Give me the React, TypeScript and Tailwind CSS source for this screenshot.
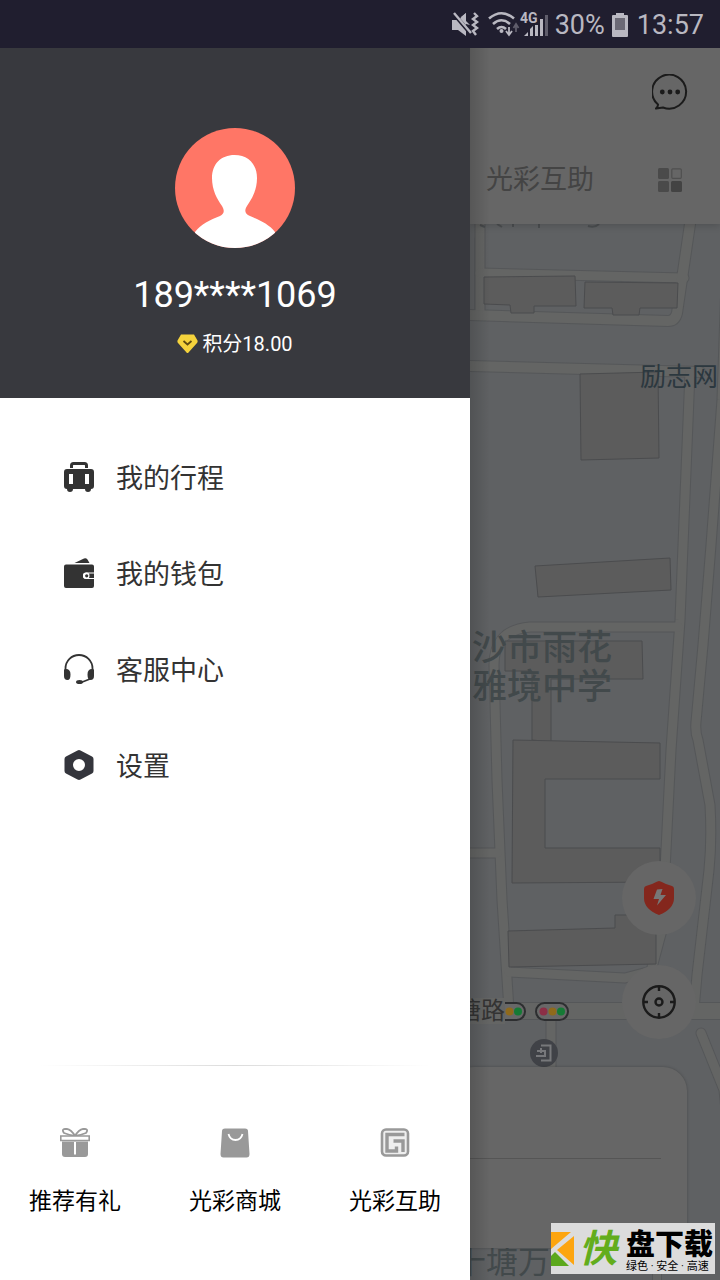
import type { ReactNode } from "react";

const roads: { d: string; w: number }[] = [
  { d: "M480 224V314", w: 9 },
  { d: "M480 273L684 278", w: 9 },
  { d: "M470 315L668 321Q675 321 677 313L690 224", w: 10 },
  { d: "M470 366L700 372", w: 10 },
  { d: "M690 372L680 620L671 750L662 930L650 975", w: 9 },
  { d: "M728 224L722 400L711 545L703 645L696 722Q695 732 698 740L710 805Q712 840 709 870L697 975L694 1010", w: 9 },
  { d: "M678 627H530Q494 630 494 665L497 780L502 900L509 1010", w: 9 },
  { d: "M470 853H497", w: 9 },
  { d: "M509 972L625 978L655 970", w: 9 },
  { d: "M470 1011H730", w: 16 },
  { d: "M551 1016V1070", w: 9 },
  { d: "M701 1033L724 1090L728 1130", w: 9 },
  { d: "M657 1240V1290", w: 8 },
];

const buildings = [
  "M484 277L575 276L576 306L534 306V313H511L510 305L484 304Z",
  "M585 282L678 283L677 308H640L639 315H613L612 308H584Z",
  "M580 374L658 372L659 458L581 460Z",
  "M535 566L670 558L671 590L538 597Z",
  "M505 641H642L643 679H551V742L532 740V671H505Z",
  "M513 740L660 743V779H545V848H660V882L512 883Z",
  "M508 931L615 928V915H656V964L509 967Z",
];

function MapCanvas() {
  return (
    <svg
      className="absolute inset-0 h-full w-full"
      viewBox="470 224 250 1056"
      preserveAspectRatio="xMinYMin slice"
      aria-hidden="true"
    >
      <rect x="470" y="224" width="800" height="1056" fill="#5f6163" />
      <g fill="none" stroke="#555759" strokeLinejoin="round" strokeLinecap="round">
        <path d="M475 238V310" strokeWidth="1" />
        {roads.map((r) => (
          <path key={r.d} d={r.d} strokeWidth={r.w + 2} />
        ))}
      </g>
      <g fill="none" stroke="#646564" strokeLinejoin="round" strokeLinecap="round">
        {roads.map((r) => (
          <path key={r.d} d={r.d} strokeWidth={r.w} />
        ))}
      </g>
      <g fill="#5c5c5c" stroke="#4b4c4e" strokeWidth="1">
        {buildings.map((d) => (
          <path key={d} d={d} />
        ))}
      </g>
      <path
        d="M480 225l5 2M497 224l5 3M513 224v3M539 224v4M588 226q7 2 11-2"
        stroke="#4b4e50"
        strokeWidth="2"
        fill="none"
      />
    </svg>
  );
}

function TrafficLight() {
  return (
    <svg width="34" height="19" viewBox="0 0 34 19" aria-hidden="true">
      <rect x="1" y="1" width="32" height="17" rx="8.5" fill="#686868" stroke="#2d2e30" strokeWidth="2" />
      <circle cx="8.500" cy="9.500" r="4" fill="#8c2f46" />
      <circle cx="17.500" cy="9.500" r="4" fill="#8f6a1c" />
      <circle cx="26" cy="9.500" r="4" fill="#157a35" />
    </svg>
  );
}

function StatusBar() {
  return (
    <header className="flex h-12 shrink-0 items-center justify-end bg-[#201e2f] pt-0.5 pr-4 font-[Roboto,sans-serif] text-[27px] leading-8 text-[#b9b8c1]">
      <svg width="98" height="28" viewBox="0 0 98 28" aria-hidden="true" className="mr-1.5">
        <g fill="#b9b8c1">
          <path d="M1 9h6l8-7v8l4 4-4-1v12L7 19H1z" />
          <path d="M15 10V2l-5 4z" />
        </g>
        <path d="M2 2l18 21" stroke="#201e2f" strokeWidth="4" />
        <path d="M3 2l17 20" stroke="#b9b8c1" strokeWidth="2.400" />
        <path d="M23 2l3 3-4 3 4 3-4 3 4 3-4 3 3 4" stroke="#b9b8c1" strokeWidth="2.400" fill="none" />
        <g fill="none" stroke="#b9b8c1" strokeWidth="2.600">
          <path d="M38 7.500Q50.500-3 63 7.500" />
          <path d="M42 13q8.500-7.500 17 0" />
          <path d="M46 18q4.500-4 9 0" />
        </g>
        <circle cx="50.500" cy="20" r="2" fill="#b9b8c1" />
        <path d="M58 16v7M55 20l3 4 3-4" stroke="#b9b8c1" strokeWidth="1.800" fill="none" />
        <path d="M65 21v-7M62.500 17l2.500-4 2.500 4" stroke="#5f5d6b" strokeWidth="1.800" fill="none" />
        <text x="69" y="12" fontSize="14" fontWeight="700" fill="#b9b8c1" fontFamily="Roboto, sans-serif">
          4G
        </text>
        <path d="M73 25l4-4v4zM79 25v-7l3-3v10zM84 25V14h3v11zM89 25V8h3v17z" fill="#b9b8c1" />
        <path d="M94 4h3v21h-3z" fill="#5f5d6b" />
      </svg>
      <span>30%</span>
      <svg width="18" height="24" viewBox="0 0 18 24" aria-hidden="true" className="mr-2 ml-1.5">
        <path d="M5 0h8v2h3q1 0 1 1v20q0 1-1 1H2q-1 0-1-1V3q0-1 1-1h3z" fill="#b9b8c1" />
        <path d="M4 5h10v12H4z" fill="#6b6975" />
      </svg>
      <span>13:57</span>
    </header>
  );
}

function MenuItem({ icon, label }: { icon: ReactNode; label: string }) {
  return (
    <li>
      <a href="#" className="flex h-24 items-center gap-[22px] pl-16 text-[27px] leading-10 text-[#333333]">
        <svg width="30" height="30" viewBox="0 0 30 30" aria-hidden="true">
          {icon}
        </svg>
        <span className="pt-1">{label}</span>
      </a>
    </li>
  );
}

function Shortcut({ icon, label }: { icon: ReactNode; label: string }) {
  return (
    <a href="#" className="flex flex-col items-center gap-7 text-[23px] leading-8 text-black">
      <svg width="30" height="30" viewBox="0 0 30 30" aria-hidden="true">
        {icon}
      </svg>
      <span>{label}</span>
    </a>
  );
}

function Drawer() {
  return (
    <aside className="flex w-[470px] shrink-0 flex-col bg-white">
      <section className="flex flex-col items-center bg-[#38393e] pt-20 pb-10 text-white">
        <svg width="120" height="120" viewBox="0 0 120 120" aria-hidden="true">
          <defs>
            <clipPath id="avatar">
              <circle cx="60" cy="60" r="60" />
            </clipPath>
          </defs>
          <g clipPath="url(#avatar)">
            <rect width="120" height="120" fill="#ff7666" />
            <path
              d="M59.500 27C46 27 37 36 37 50C37 62 42 71 47 78C50 83 49 86 45 88C35 92 26 96 20 104V122H100V104C94 96 84 92 75 88C70 86 69 83 72 78C77 71 82 62 82 50C82 36 73 27 59.500 27Z"
              fill="#fff"
            />
          </g>
        </svg>
        <h1 className="mt-6 text-[36px] leading-[46px] font-normal">189****1069</h1>
        <p className="mt-3 flex items-center gap-1 text-[20px] leading-7">
          <svg width="21" height="20" viewBox="0 0 21 20" aria-hidden="true">
            <path d="M4 0.500H17L20.500 6.500Q21 8 20 9L11.500 18.500Q10.500 19.500 9.500 18.500L1 9Q0 8 0.500 6.500Z" fill="#f5d33c" />
            <path d="M6.500 7L10.500 10.500L14.500 7" fill="none" stroke="#5d4a12" strokeWidth="1.800" />
          </svg>
          <span>积分18.00</span>
        </p>
      </section>

      <nav className="pt-[31px]">
        <ul>
          <MenuItem
            label="我的行程"
            icon={
              <>
                <path d="M7.500 6V3.500Q7.500 1.500 9.500 1.500H20.500Q22.500 1.500 22.500 3.500V6" fill="none" stroke="#333" strokeWidth="3" />
                <path
                  fillRule="evenodd"
                  d="M3 7H27Q30 7 30 10V24Q30 27 27 27Q27 30 24 30Q21 30 21 27H9Q9 30 6 30Q3 30 3 27Q0 27 0 24V10Q0 7 3 7ZM5 12V22H9V12ZM21 12V22H25V12Z"
                  fill="#333"
                />
              </>
            }
          />
          <MenuItem
            label="我的钱包"
            icon={
              <>
                <path d="M10.500 5L20 0.500Q22 -0.500 23.500 1.500L25.500 5Z" fill="#333" />
                <path
                  d="M2 6.500H28Q30 6.500 30 8.500V14.500H22.500Q19 14.500 19 17.800Q19 21 22.500 21H30V28Q30 30 28 30H2Q0 30 0 28V8.500Q0 6.500 2 6.500Z"
                  fill="#333"
                />
                <path d="M23 16H30V19.700H23Q21 19.700 21 17.800Q21 16 23 16Z" fill="#fff" />
                <path d="M22 15.500H30V20H22Z" fill="#333" />
                <path d="M22.500 14.500Q19 14.500 19 17.800Q19 21 22.500 21Q25.500 21 25.500 17.800Q25.500 14.500 22.500 14.500Z" fill="#fff" />
                <circle cx="22.700" cy="17.800" r="1.600" fill="#333" />
              </>
            }
          />
          <MenuItem
            label="客服中心"
            icon={
              <>
                <path d="M1.500 18V14.500A13.500 13.500 0 0 1 28.500 14.500V18" fill="none" stroke="#333" strokeWidth="1.800" />
                <path d="M0 16Q0 15 2 15Q6.500 15 6.500 20.500Q6.500 26 3.500 26Q0 26 0 22ZM30 16Q30 15 28 15Q23.500 15 23.500 20.500Q23.500 26 26.500 26Q30 26 30 22Z" fill="#333" />
                <path d="M26 25L17 28.500" stroke="#333" strokeWidth="1.600" />
                <ellipse cx="15.500" cy="28" rx="3.500" ry="2" fill="#333" />
              </>
            }
          />
          <MenuItem
            label="设置"
            icon={
              <path
                fillRule="evenodd"
                d="M13.500 0.500Q15 -0.300 16.500 0.500L28 6.500Q29.500 7.200 29.500 9V21Q29.500 22.800 28 23.500L16.500 29.500Q15 30.300 13.500 29.500L2 23.500Q0.500 22.800 0.500 21V9Q0.500 7.200 2 6.500ZM15 9A6 6 0 1 0 15 21A6 6 0 1 0 15 9Z"
                fill="#34353c"
              />
            }
          />
        </ul>
      </nav>

      <footer className="mt-auto">
        <div className="mx-10 h-px bg-linear-to-r from-transparent via-[#dcdcdc] to-transparent" />
        <div className="flex justify-between px-[29px] pt-[62px] pb-[62px]">
          <Shortcut
            label="推荐有礼"
            icon={
              <>
                <path
                  d="M15 8Q9 7 4 5Q1 1 6 0.800Q11 1 15 8ZM15 8Q21 7 26 5Q29 1 24 0.800Q19 1 15 8Z"
                  fill="none"
                  stroke="#999"
                  strokeWidth="1.800"
                />
                <path d="M0.800 8H29.200V12.500H0.800Z" fill="#fff" stroke="#999" strokeWidth="1.600" />
                <path d="M2 13.500H28V26Q28 29 25 29H5Q2 29 2 26Z" fill="#999" />
                <path d="M15 14V26.500" stroke="#fff" strokeWidth="2" />
              </>
            }
          />
          <Shortcut
            label="光彩商城"
            icon={
              <>
                <path d="M5 0.500H25Q28 0.500 28 3L29.500 26Q29.500 29.500 26.500 29.500H3.500Q0.500 29.500 0.500 26L2 3Q2 0.500 5 0.500Z" fill="#999" />
                <path d="M8.500 6Q10 12 15.500 12Q21 12 22.500 6" fill="none" stroke="#fff" strokeWidth="1.800" />
              </>
            }
          />
          <Shortcut
            label="光彩互助"
            icon={
              <>
                <rect x="2" y="1.500" width="26" height="26" rx="4" fill="#eee" stroke="#999" strokeWidth="2.600" />
                <path d="M24.500 6.500H7V23H16.500V18.500" fill="none" stroke="#999" strokeWidth="3.400" />
                <path d="M13.500 13H23V24" fill="none" stroke="#999" strokeWidth="3.400" />
              </>
            }
          />
        </div>
      </footer>
    </aside>
  );
}

function MapScreen() {
  return (
    <main className="relative flex min-w-0 flex-1 flex-col overflow-hidden bg-[#5f6163]">
      <header className="z-10 flex h-44 shrink-0 flex-col bg-[#666666] shadow-[0_1px_8px_rgba(0,0,0,0.2)]">
        <button type="button" aria-label="消息" className="mt-[26px] mr-8 self-end">
          <svg width="36" height="36" viewBox="0 0 36 36" aria-hidden="true">
            <path
              d="M6 30.500A17 17 0 1 1 11 33.500L4 34.500Q6.200 32.500 6 30.500Z"
              fill="none"
              stroke="#1b1b1b"
              strokeWidth="2"
              strokeLinejoin="round"
            />
            <g fill="#1b1b1b">
              <circle cx="10.300" cy="18" r="2.400" />
              <circle cx="18" cy="18" r="2.400" />
              <circle cx="25.700" cy="18" r="2.400" />
            </g>
          </svg>
        </button>
        <div className="mt-[50px] flex items-center justify-between pr-[38px] pl-4">
          <a href="#" className="text-[27px] leading-10 whitespace-nowrap text-[#444444]">
            光彩互助
          </a>
          <button type="button" aria-label="全部">
            <svg width="24" height="24" viewBox="0 0 24 24" aria-hidden="true">
              <g fill="#4a4a4a">
                <rect width="11" height="11" rx="1.500" />
                <rect y="13" width="11" height="11" rx="1.500" />
                <rect x="13" y="13" width="11" height="11" rx="1.500" fill="#434343" />
              </g>
              <rect x="13.800" y="0.800" width="9.500" height="9.500" rx="1" fill="none" stroke="#4f4f4f" strokeWidth="1.200" />
            </svg>
          </button>
        </div>
      </header>

      <section className="relative flex-1 overflow-hidden">
        <MapCanvas />
        <span className="absolute top-[133px] left-[170px] text-[26px] leading-10 whitespace-nowrap text-[#2c383f]">
          励志网
        </span>
        <p className="absolute top-[405px] right-[108px] text-right text-[35px] leading-[39px] font-medium whitespace-nowrap text-[#42494b]">
          沙市雨花
          <br />
          雅境中学
        </p>
        <span className="absolute top-[778px] left-[22px]">
          <TrafficLight />
        </span>
        <span className="absolute top-[774px] right-[215px] bg-[#646564] text-[24px] leading-[26px] whitespace-nowrap text-[#333333]">
          塘路
        </span>
        <span className="absolute top-[778px] left-[65px]">
          <TrafficLight />
        </span>
        <svg className="absolute top-[815px] left-[60px]" width="28" height="28" viewBox="0 0 28 28" aria-hidden="true">
          <circle cx="14" cy="14" r="14" fill="#404247" />
          <path d="M11 6.500H20.500V21.500H11M7 12H15V17H6M11 9V14" fill="none" stroke="#77787b" strokeWidth="2" />
        </svg>
        <span className="absolute bottom-0 left-[-16px] text-[32px] leading-9 whitespace-nowrap text-[#42494b]">
          十塘万
        </span>
        <div className="absolute right-[33px] bottom-8 left-[-20px] h-[181px] rounded-t-3xl bg-[#666666] pt-[91px] shadow-[0_0_3px_rgba(0,0,0,0.25)]">
          <hr className="mr-[26px] border-[#555555]" />
        </div>
        <button
          type="button"
          aria-label="安全中心"
          className="absolute top-[637px] right-6 flex size-[74px] items-center justify-center rounded-full bg-[#666666]"
        >
          <svg width="30" height="34" viewBox="0 0 30 34" aria-hidden="true">
            <path d="M15 0Q16 0 22 3L28 5Q30 5.500 30 8V17Q30 28 15 34Q0 28 0 17V8Q0 5.500 2 5L8 3Q14 0 15 0Z" fill="#84271d" />
            <path d="M13 8.500L18.500 8L16.500 14H22L13 24.500L15 18H9.500Z" fill="#777" />
          </svg>
        </button>
        <button
          type="button"
          aria-label="定位"
          className="absolute top-[741px] right-6 flex size-[74px] items-center justify-center rounded-full bg-[#666666]"
        >
          <svg width="34" height="34" viewBox="0 0 34 34" aria-hidden="true">
            <g fill="none" stroke="#1b1b1b" strokeWidth="2.400">
              <circle cx="17" cy="17" r="15.700" />
              <circle cx="17" cy="17" r="3.500" />
              <path d="M17 1V6M17 28V33M1 17H6M28 17H33" />
            </g>
          </svg>
        </button>
        <div className="absolute right-[5px] bottom-[6px] flex h-[51px] w-[164px] items-center gap-[5px] overflow-hidden bg-[#dcdcdc]">
          <svg width="23" height="34" viewBox="0 0 23 34" className="shrink-0" aria-hidden="true">
            <path d="M0 0H20L0 17ZM23 4V33L6 18Z" fill="#fda50f" />
            <path d="M4 20L18 34H0V24Z" fill="#5ca81c" />
          </svg>
          <span className="shrink-0 text-[38px] leading-10 font-bold text-[#63ad1c] italic">快</span>
          <span className="flex shrink-0 flex-col pt-2 pl-1 text-black">
            <span className="text-[29px] leading-7 font-black whitespace-nowrap">盘下载</span>
            <span className="text-[11px] leading-4 whitespace-nowrap">绿色 · 安全 · 高速</span>
          </span>
        </div>
      </section>
      <div className="pointer-events-none absolute inset-y-0 left-0 z-20 w-5 bg-linear-to-r from-black/15 to-transparent" />
    </main>
  );
}

export default function App() {
  return (
    <div className="flex min-h-screen flex-col bg-white font-[Roboto,'Noto_Sans_CJK_SC',sans-serif]">
      <StatusBar />
      <div className="flex flex-1">
        <Drawer />
        <MapScreen />
      </div>
    </div>
  );
}
